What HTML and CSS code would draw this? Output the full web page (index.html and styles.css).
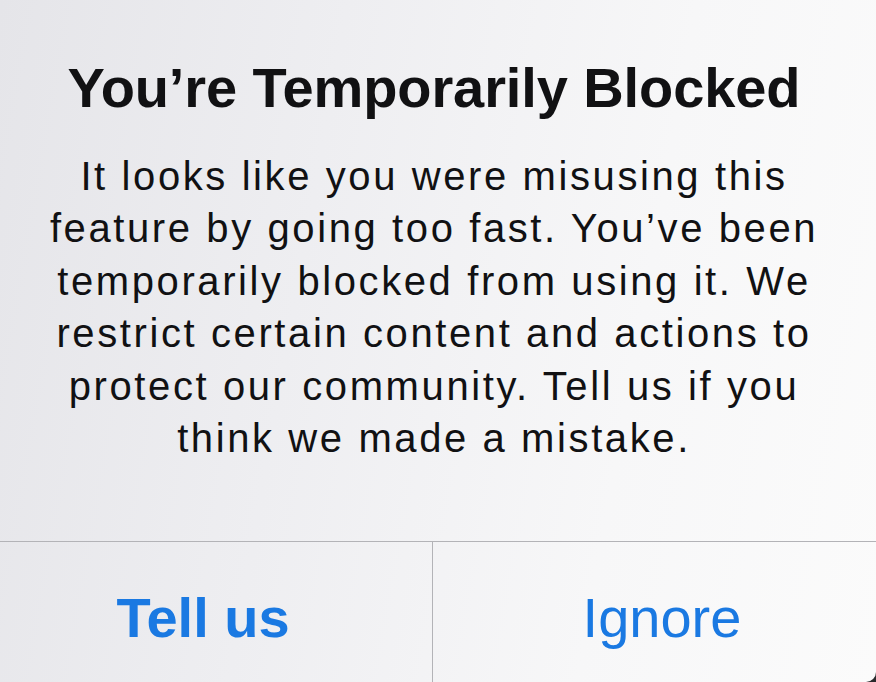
FILE: index.html
```html
<!DOCTYPE html>
<html lang="en">
<head>
<meta charset="utf-8">
<title>You're Temporarily Blocked</title>
<link rel="stylesheet" href="styles.css">
</head>
<body>
<div class="alert">
  <div class="content">
    <h1 class="title">You’re Temporarily Blocked</h1>
    <p class="message">It looks like you were misusing this<br>feature by going too fast. You’ve been<br>temporarily blocked from using it. We<br>restrict certain content and actions to<br>protect our community. Tell us if you<br>think we made a mistake.</p>
  </div>
  <div class="actions">
    <div class="action primary">Tell us</div>
    <div class="action secondary">Ignore</div>
  </div>
</div>
</body>
</html>
```
FILE: styles.css
```css
html, body {
  margin: 0;
  padding: 0;
  width: 876px;
  height: 682px;
  overflow: hidden;
  background: #2a2a2c;
}
.alert {
  width: 876px;
  height: 682px;
  display: flex;
  flex-direction: column;
  border-bottom-right-radius: 10px;
  background: linear-gradient(100deg, #e5e5e9 0%, #eeeef1 35%, #f7f7f8 70%, #fbfbfb 100%);
  font-family: "Liberation Sans", Arial, sans-serif;
  color: #111113;
}
.content {
  height: 541px;
  box-sizing: border-box;
  padding: 56px 8px 0 0;
  text-align: center;
}
.title {
  margin: 0;
  font-size: 56px;
  line-height: 64px;
  font-weight: 700;
  letter-spacing: -0.1px;
}
.message {
  margin: 30px 0 0;
  font-size: 40px;
  line-height: 52.4px;
  font-weight: 400;
  letter-spacing: 2.6px;
}
.actions {
  flex: 1;
  display: flex;
  border-top: 1px solid #b3b3b7;
}
.action {
  box-sizing: border-box;
  padding-top: 44px;
  text-align: center;
  font-size: 56px;
  line-height: 64px;
  color: #1a79e2;
}
.primary {
  flex: 0 0 432px;
  padding-right: 26px;
  font-weight: 700;
}
.secondary {
  flex: 1;
  padding-left: 15px;
  border-left: 1px solid #b3b3b7;
}
```
